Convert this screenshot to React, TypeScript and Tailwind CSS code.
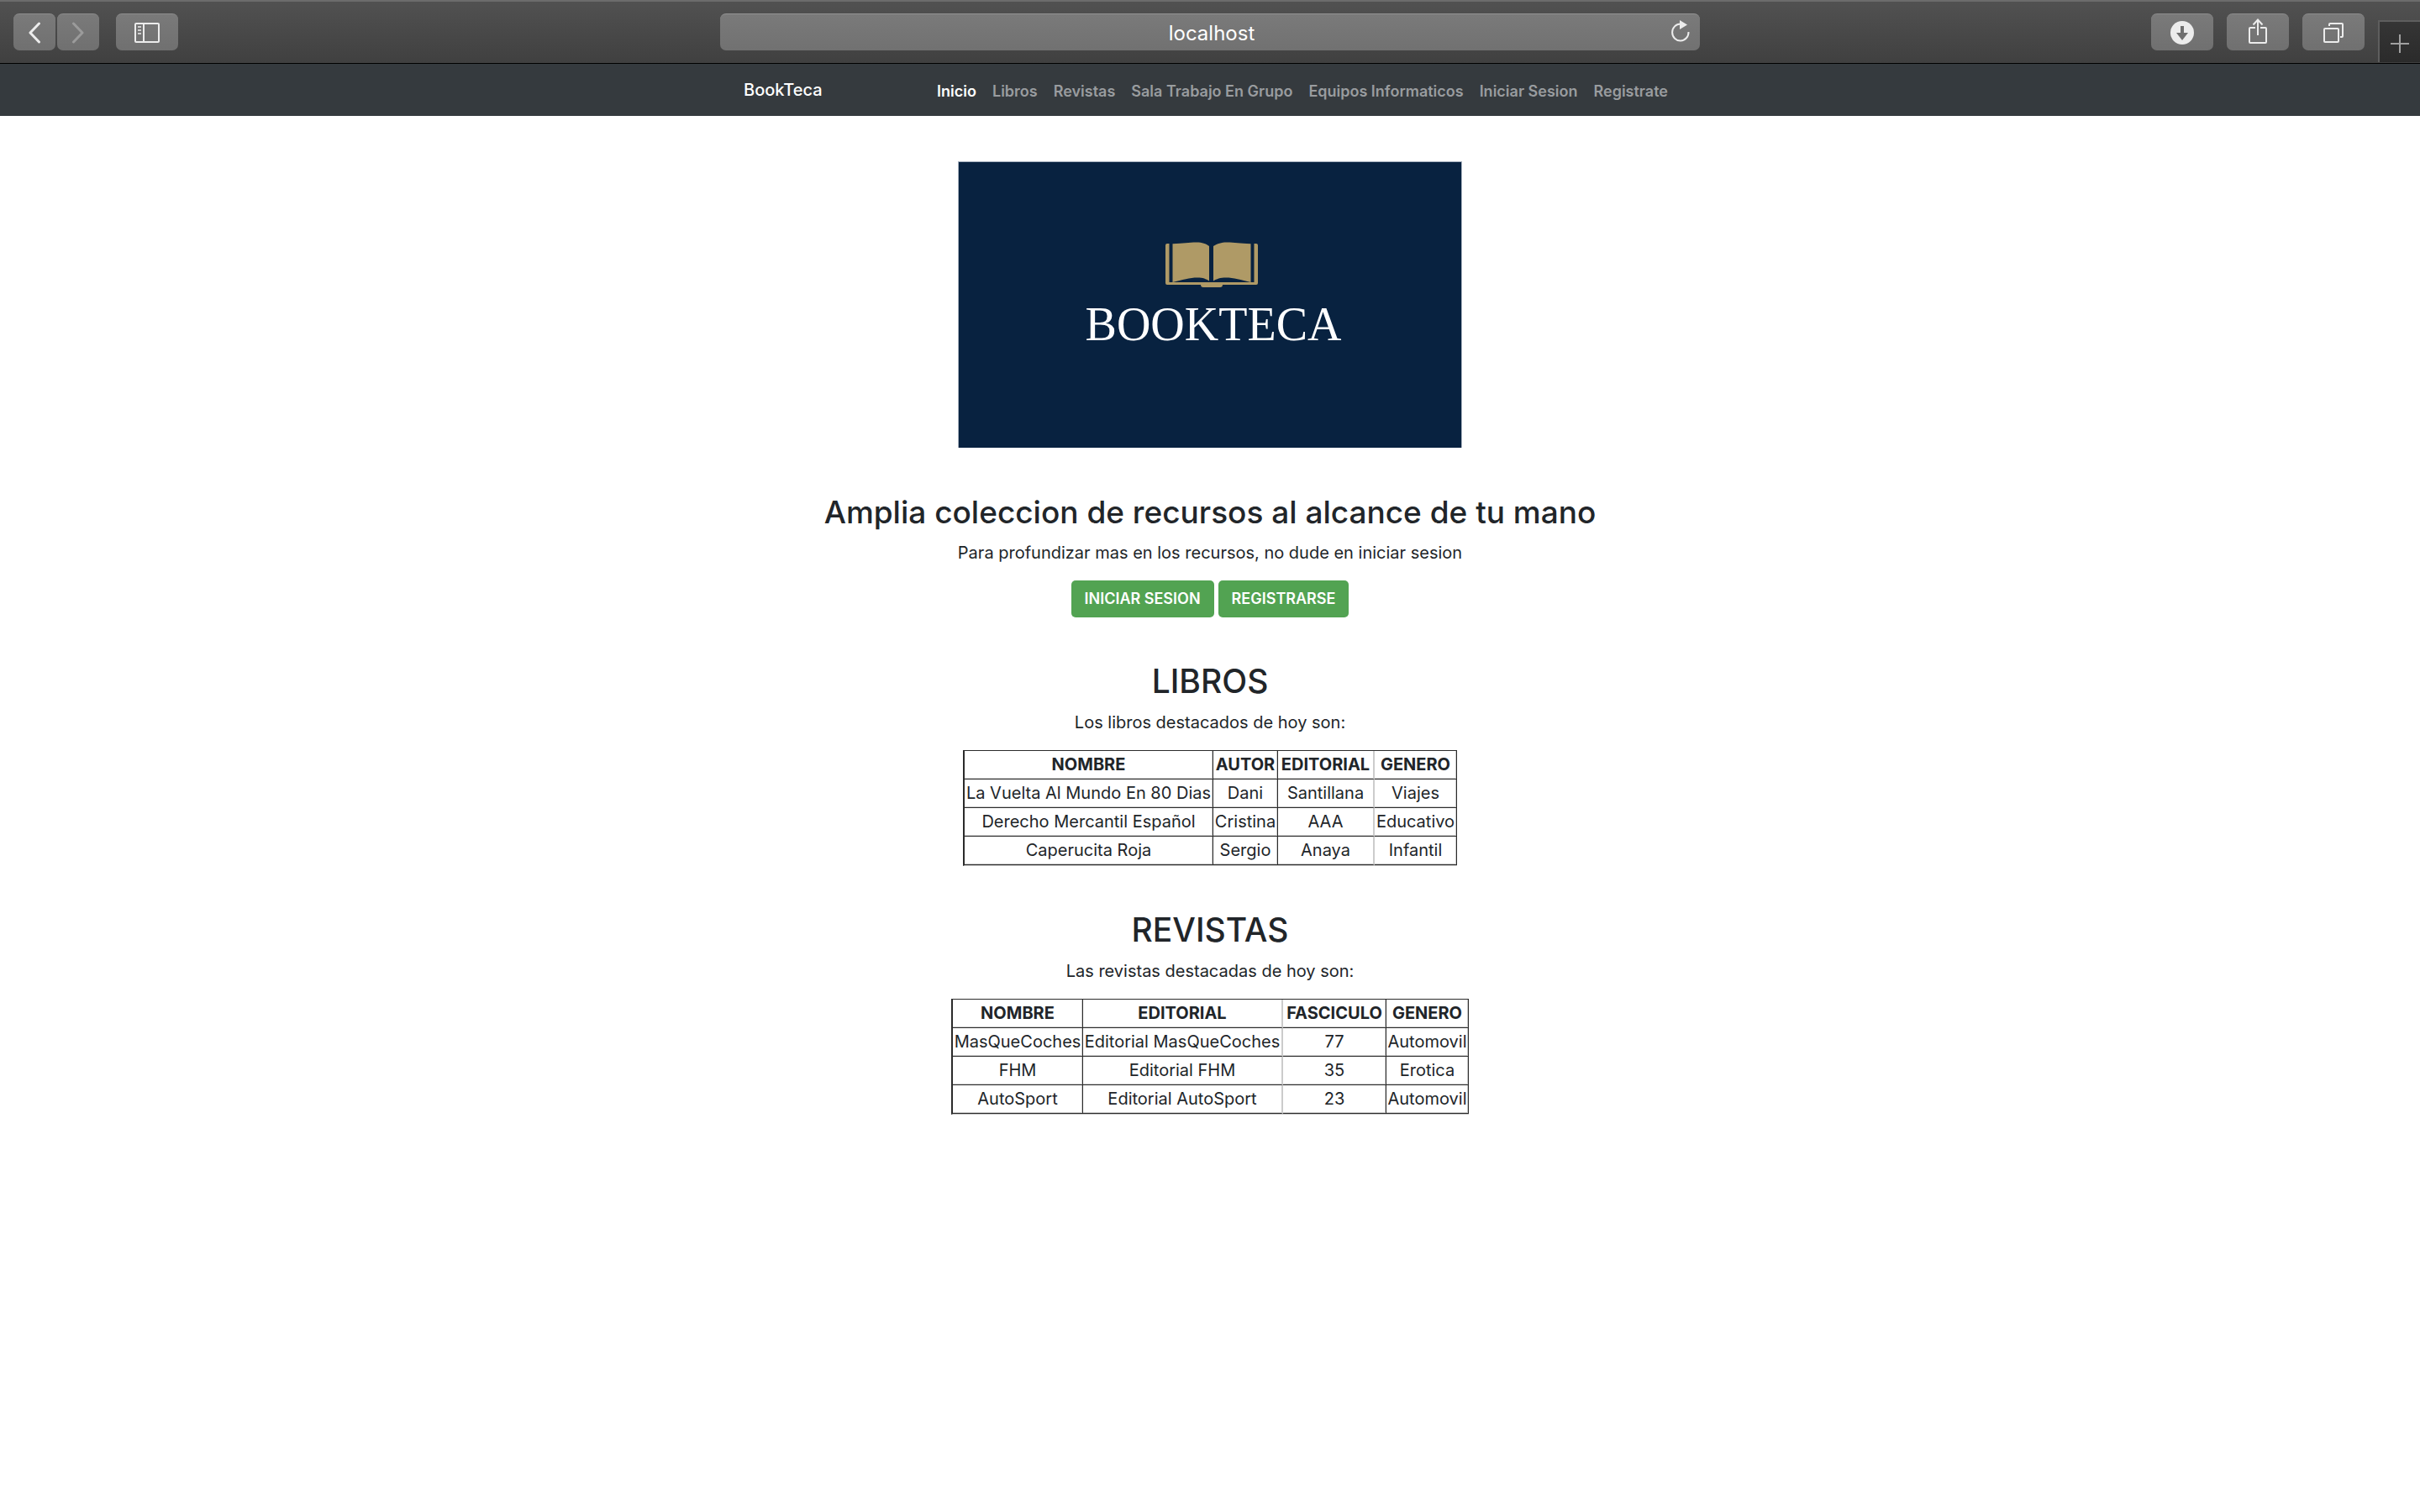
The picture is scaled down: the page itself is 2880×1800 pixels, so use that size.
import React from "react";

const navLinks = [
  "Inicio",
  "Libros",
  "Revistas",
  "Sala Trabajo En Grupo",
  "Equipos Informaticos",
  "Iniciar Sesion",
  "Registrate",
];

type Column = { label: string; width: string; edge: string };

const dark = "border-r border-r-[#2b2b2b] shadow-[inset_-1px_-1px_0_#cccccc]";
const light = "border-r-2 border-r-[#cccccc] shadow-[inset_0_-1px_0_#cccccc]";

const bookColumns: Column[] = [
  { label: "NOMBRE", width: "w-[296px]", edge: dark },
  { label: "AUTOR", width: "w-[77px]", edge: dark },
  { label: "EDITORIAL", width: "w-[115px]", edge: light },
  { label: "GENERO", width: "w-[98px]", edge: dark },
];
const books = [
  ["La Vuelta Al Mundo En 80 Dias", "Dani", "Santillana", "Viajes"],
  ["Derecho Mercantil Español", "Cristina", "AAA", "Educativo"],
  ["Caperucita Roja", "Sergio", "Anaya", "Infantil"],
];

const magazineColumns: Column[] = [
  { label: "NOMBRE", width: "w-[155px]", edge: dark },
  { label: "EDITORIAL", width: "w-[238px]", edge: light },
  { label: "FASCICULO", width: "w-[123px]", edge: dark },
  { label: "GENERO", width: "w-[98px]", edge: dark },
];
const magazines = [
  ["MasQueCoches", "Editorial MasQueCoches", "77", "Automovil"],
  ["FHM", "Editorial FHM", "35", "Erotica"],
  ["AutoSport", "Editorial AutoSport", "23", "Automovil"],
];

function ToolButton({ label, wide, children }: { label: string; wide?: boolean; children: React.ReactNode }) {
  return (
    <button
      type="button"
      aria-label={label}
      className={`flex h-11 items-center justify-center rounded-[7px] border-t border-[#8c8c8c] bg-linear-to-b from-[#7a7a7a] to-[#707070] ${wide ? "w-[74px]" : "w-[50px]"}`}
    >
      {children}
    </button>
  );
}

function BrowserBar() {
  return (
    <header className="grid h-[76px] grid-cols-[1fr_minmax(0,1166px)_1fr] border-t-2 border-b border-t-[#6c6c6c] border-b-black bg-linear-to-b from-[#515151] to-[#404040]">
      <div className="flex items-start pt-[14px] pl-4">
        <ToolButton label="Atrás">
          <svg width="16" height="26" viewBox="0 0 16 26" fill="none" stroke="#ececec" strokeWidth="3" strokeLinecap="round" strokeLinejoin="round">
            <path d="M13.5 2 3 13l10.500 11" />
          </svg>
        </ToolButton>
        <div className="w-0.5" />
        <ToolButton label="Adelante">
          <svg width="16" height="26" viewBox="0 0 16 26" fill="none" stroke="#9b9b9b" strokeWidth="3" strokeLinecap="round" strokeLinejoin="round">
            <path d="M2.500 2 13 13 2.500 24" />
          </svg>
        </ToolButton>
        <div className="w-5" />
        <ToolButton label="Barra lateral" wide>
          <svg width="30" height="24" viewBox="0 0 30 24" fill="none" stroke="#ececec" strokeWidth="2">
            <rect x="1" y="1" width="28" height="22" rx="1" />
            <path d="M11 1v22" />
            <path d="M4 5h4M4 9h4M4 13h4" stroke="#cfcfcf" />
          </svg>
        </ToolButton>
      </div>

      <div className="relative mt-[14px] h-11">
        <input
          aria-label="Dirección"
          defaultValue="localhost"
          className="h-11 w-full rounded-[7px] border-t border-[#929292] bg-linear-to-b from-[#7a7a7a] to-[#717171] pt-0.5 pl-1 text-center text-2xl text-white outline-none"
        />
        <button type="button" aria-label="Recargar" className="absolute top-2 right-3">
          <svg width="22" height="28" viewBox="0 0 22 28">
            <path d="M11 4.500A9.700 10 0 1 0 20.500 14" fill="none" stroke="#ececec" strokeWidth="2" />
            <path d="M10 0v11l9-5.500z" fill="#ececec" />
          </svg>
        </button>
      </div>

      <div className="flex items-start justify-end gap-4">
        <div className="flex gap-4 pt-[14px]">
          <ToolButton label="Descargas" wide>
            <svg width="28" height="28" viewBox="0 0 28 28">
              <circle cx="14" cy="14" r="14" fill="#ececec" />
              <path d="M12 6h4v8h5l-7 9-7-9h5z" fill="#6f6f6f" />
            </svg>
          </ToolButton>
          <ToolButton label="Compartir" wide>
            <svg width="22" height="30" viewBox="0 0 22 30" fill="none" stroke="#ececec" strokeWidth="2" className="-mt-1">
              <path d="M8 11H2q-1 0-1 1v16q0 1 1 1h18q1 0 1-1V12q0-1-1-1h-6" />
              <path d="M11 20V2M5.500 7.500 11 1.500l5.500 6" />
            </svg>
          </ToolButton>
          <ToolButton label="Pestañas" wide>
            <svg width="24" height="24" viewBox="0 0 24 24" fill="none" stroke="#ececec" strokeWidth="2">
              <rect x="1" y="7" width="17" height="16" rx="1" />
              <path d="M7 4V2q0-1 1-1h14q1 0 1 1v14q0 1-1 1h-2" />
            </svg>
          </ToolButton>
        </div>
        <button
          type="button"
          aria-label="Nueva pestaña"
          className="mt-[22px] flex h-[50px] w-[50px] items-center justify-center border-t-2 border-l-2 border-[#5e5e5e] bg-linear-to-b from-[#353535] to-[#2b2b2b] pt-1"
        >
          <svg width="22" height="22" viewBox="0 0 22 22" stroke="#a0a0a0" strokeWidth="2">
            <path d="M11 0v22M0 11h22" />
          </svg>
        </button>
      </div>
    </header>
  );
}

function NavBar() {
  return (
    <nav className="bg-[#353a3e]">
      <div className="mx-auto flex h-[62px] max-w-[1110px] items-center justify-between pr-[10px]">
        <a href="#" className="text-xl font-medium text-white">
          BookTeca
        </a>
        <ul className="flex gap-[19px] pt-1 text-lg font-semibold">
          {navLinks.map((link, i) => (
            <li key={link}>
              <a href="#" className={i === 0 ? "text-white" : "text-[#999c9f]"}>
                {link}
              </a>
            </li>
          ))}
        </ul>
      </div>
    </nav>
  );
}

function Logo() {
  return (
    <div className="mx-auto flex h-[341px] w-[600px] flex-col items-center border-x border-t border-[#a9b3c0] bg-[#082240] pt-[95px]">
      <svg width="110" height="54" viewBox="0 0 110 54" fill="#af9a66" className="ml-1" role="img" aria-label="Libro abierto">
        <path d="M0 4Q0 2 2 2h2.500v46h101V2H108q2 0 2 2v45q0 2-2 2H68q0 3-3 3H45q-3 0-3-3H2q-2 0-2-2z" />
        <path d="M8.500 2.200C22 2 27 .5 37 .5c7 0 11 1.500 15 4.500v41.500C48 44 45 42.500 38 42.500c-9 0-18 2.500-29.500 5.500z" />
        <path d="M101.500 2.200C88 2 83 .5 73 .5c-7 0-11 1.500-16 4.500v41.500C61 44 65 42.500 72 42.500c9 0 18 2.500 29.500 5.500z" />
      </svg>
      <span className="mt-4 ml-2 font-['Liberation_Serif',serif] text-[56px] leading-[56px] text-white">BOOKTECA</span>
    </div>
  );
}

function DataTable({ label, columns, rows }: { label: string; columns: Column[]; rows: string[][] }) {
  return (
    <table
      aria-label={label}
      className="mx-auto mt-[18px] border-separate border-spacing-0 border-t border-b border-l-2 border-[#2b2b2b] border-b-[#cccccc] whitespace-nowrap"
    >
      <thead>
        <tr>
          {columns.map((c) => (
            <th key={c.label} scope="col" className={`h-[34px] border-b border-b-[#2b2b2b] p-0 pb-0.5 font-bold ${c.width} ${c.edge}`}>
              <div className="flex w-0 min-w-full justify-center">{c.label}</div>
            </th>
          ))}
        </tr>
      </thead>
      <tbody>
        {rows.map((row) => (
          <tr key={row[0]}>
            {row.map((cell, i) => (
              <td key={i} className={`h-[34px] border-b border-b-[#2b2b2b] p-0 pb-0.5 ${columns[i].edge}`}>
                <div className="flex w-0 min-w-full justify-center">{cell}</div>
              </td>
            ))}
          </tr>
        ))}
      </tbody>
    </table>
  );
}

function Featured({ title, text, columns, rows }: { title: string; text: string; columns: Column[]; rows: string[][] }) {
  return (
    <section className="mt-[52px]">
      <h2 className="text-[39px] leading-12 font-medium">{title}</h2>
      <p className="mt-[10px]">{text}</p>
      <DataTable label={title} columns={columns} rows={rows} />
    </section>
  );
}

export default function App() {
  return (
    <div className="min-h-screen bg-white font-['Inter',sans-serif] text-[#212529]">
      <BrowserBar />
      <NavBar />
      <main className="pt-[54px] text-center text-xl leading-[30px]">
        <Logo />
        <h1 className="mt-[53px] text-[37px] leading-12 font-medium">Amplia coleccion de recursos al alcance de tu mano</h1>
        <p className="mt-[9px]">Para profundizar mas en los recursos, no dude en iniciar sesion</p>
        <div className="mt-[18px] flex justify-center gap-[5px] text-lg font-semibold text-white">
          <button type="button" className="h-11 rounded-[5px] bg-[#52a352] px-4">
            INICIAR SESION
          </button>
          <button type="button" className="h-11 rounded-[5px] bg-[#52a352] px-4">
            REGISTRARSE
          </button>
        </div>
        <Featured title="LIBROS" text="Los libros destacados de hoy son:" columns={bookColumns} rows={books} />
        <Featured title="REVISTAS" text="Las revistas destacadas de hoy son:" columns={magazineColumns} rows={magazines} />
      </main>
    </div>
  );
}
